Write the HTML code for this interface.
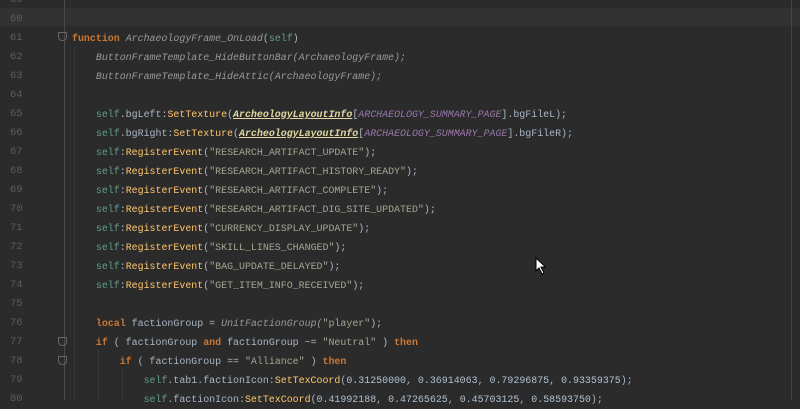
<!DOCTYPE html>
<html><head><style>
body{margin:0;width:800px;height:400px;overflow:hidden;background:#2b2b2b;position:relative;font-family:"Liberation Mono",monospace;}
.hl{position:absolute;left:0;top:8px;width:800px;height:18px;background:#323232;}
.gut{position:absolute;left:64px;top:0;width:1px;height:400px;background:#4a4a4a;}
.rm{position:absolute;left:791px;top:0;width:1px;height:400px;background:#444;}
.ig{position:absolute;width:1px;background:#3a3a3a;}
.ln{position:absolute;left:10px;width:30px;color:#5a5d60;font-size:10.5px;line-height:19px;}
.c{position:absolute;left:72px;white-space:pre;font-size:9.95px;line-height:19px;color:#a9b7c6;}
.k{color:#cc7832;font-weight:bold}
.s{color:#5f9e8a}
.f{color:#ffc66d}
.g{color:#9a9a9a;font-style:italic}
.str{color:#a5a592}
.u{color:#e0d8a0;font-weight:bold;text-decoration:underline;font-style:italic}
.p{color:#9876aa;font-style:italic}
.n{color:#b0c0d0}
.fold{position:absolute;left:58px;width:9px;height:9px;border:1px solid #666;border-radius:0 0 4px 4px;box-sizing:border-box}
</style></head><body>
<div class="hl"></div>
<div class="gut"></div>
<div class="rm"></div>
<div class="ig" style="left:74px;top:46px;height:354px"></div>
<div class="ig" style="left:98px;top:350px;height:50px"></div>
<div class="ig" style="left:122px;top:370px;height:30px"></div>
<div class="fold" style="top:32px"></div>
<div class="fold" style="top:337px"></div>
<div class="fold" style="top:356px"></div>
<div class="ln" style="top:-9px">59<br>60<br>61<br>62<br>63<br>64<br>65<br>66<br>67<br>68<br>69<br>70<br>71<br>72<br>73<br>74<br>75<br>76<br>77<br>78<br>79<br>80</div>
<div class="c" style="top:-9px">

<span class="k">function</span> <span class="g">ArchaeologyFrame_OnLoad</span>(<span class="s">self</span>)
    <span class="g">ButtonFrameTemplate_HideButtonBar(ArchaeologyFrame);</span>
    <span class="g">ButtonFrameTemplate_HideAttic(ArchaeologyFrame);</span>

    <span class="s">self</span>.bgLeft:<span class="f">SetTexture</span>(<span class="u">ArcheologyLayoutInfo</span>[<span class="p">ARCHAEOLOGY_SUMMARY_PAGE</span>].bgFileL);
    <span class="s">self</span>.bgRight:<span class="f">SetTexture</span>(<span class="u">ArcheologyLayoutInfo</span>[<span class="p">ARCHAEOLOGY_SUMMARY_PAGE</span>].bgFileR);
    <span class="s">self</span>:<span class="f">RegisterEvent</span>(<span class="str">"RESEARCH_ARTIFACT_UPDATE"</span>);
    <span class="s">self</span>:<span class="f">RegisterEvent</span>(<span class="str">"RESEARCH_ARTIFACT_HISTORY_READY"</span>);
    <span class="s">self</span>:<span class="f">RegisterEvent</span>(<span class="str">"RESEARCH_ARTIFACT_COMPLETE"</span>);
    <span class="s">self</span>:<span class="f">RegisterEvent</span>(<span class="str">"RESEARCH_ARTIFACT_DIG_SITE_UPDATED"</span>);
    <span class="s">self</span>:<span class="f">RegisterEvent</span>(<span class="str">"CURRENCY_DISPLAY_UPDATE"</span>);
    <span class="s">self</span>:<span class="f">RegisterEvent</span>(<span class="str">"SKILL_LINES_CHANGED"</span>);
    <span class="s">self</span>:<span class="f">RegisterEvent</span>(<span class="str">"BAG_UPDATE_DELAYED"</span>);
    <span class="s">self</span>:<span class="f">RegisterEvent</span>(<span class="str">"GET_ITEM_INFO_RECEIVED"</span>);

    <span class="k">local</span> factionGroup = <span class="g">UnitFactionGroup(</span><span class="str">"player"</span>);
    <span class="k">if</span> ( factionGroup <span class="k">and</span> factionGroup ~= <span class="str">"Neutral"</span> ) <span class="k">then</span>
        <span class="k">if</span> ( factionGroup == <span class="str">"Alliance"</span> ) <span class="k">then</span>
            <span class="s">self</span>.tab1.factionIcon:<span class="f">SetTexCoord</span>(<span class="n">0.31250000</span>, <span class="n">0.36914063</span>, <span class="n">0.79296875</span>, <span class="n">0.93359375</span>);
            <span class="s">self</span>.factionIcon:<span class="f">SetTexCoord</span>(<span class="n">0.41992188</span>, <span class="n">0.47265625</span>, <span class="n">0.45703125</span>, <span class="n">0.58593750</span>);</div>
<svg style="position:absolute;left:535px;top:257px" width="12" height="18" viewBox="0 0 12 18"><path d="M1 1 L1 14 L4 11 L7 17 L9 16 L6 10 L10.5 10 Z" fill="#fff" stroke="#000" stroke-width="1"/></svg>
</body></html>
